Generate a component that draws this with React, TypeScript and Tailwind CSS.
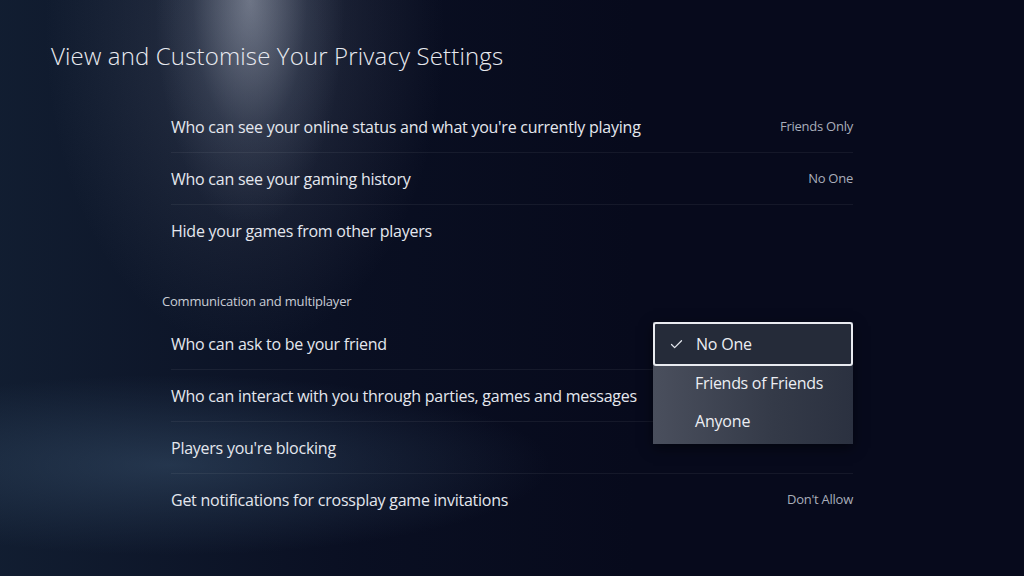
import { Check } from "lucide-react";

const privacyRows = [
  { label: "Who can see your online status and what you're currently playing", value: "Friends Only" },
  { label: "Who can see your gaming history", value: "No One" },
  { label: "Hide your games from other players", value: "" },
];

const commRows = [
  { label: "Who can ask to be your friend", value: "" },
  { label: "Who can interact with you through parties, games and messages", value: "" },
  { label: "Players you're blocking", value: "" },
  { label: "Get notifications for crossplay game invitations", value: "Don't Allow" },
];

const Row = ({ label, value, last }: { label: string; value: string; last?: boolean }) => (
  <div
    className={`flex h-[52px] items-center justify-between ${last ? "" : "border-b border-white/[0.06]"}`}
  >
    <span className="text-[16px] tracking-[-0.25px] text-[#e4e7ee]">{label}</span>
    {value && <span className="text-[13px] tracking-[-0.25px] text-[#a9aebb]">{value}</span>}
  </div>
);

export default function App() {
  return (
    <div className="relative h-[576px] w-[1024px] overflow-hidden bg-[#070a1c] font-['Open_Sans',sans-serif]">
      {/* background light */}
      <div className="pointer-events-none absolute inset-0 bg-[linear-gradient(90deg,rgba(20,34,54,0.8)_0%,rgba(12,20,40,0.5)_35%,rgba(7,10,28,0)_62%)]" />
      <div className="pointer-events-none absolute inset-0 bg-[radial-gradient(ellipse_95px_230px_at_250px_0px,rgba(200,205,218,0.5),rgba(140,150,170,0.15)_60%,transparent_100%)]" />
      <div className="pointer-events-none absolute inset-0 bg-[radial-gradient(ellipse_200px_320px_at_245px_30px,rgba(120,130,150,0.28),transparent_100%)]" />
      <div className="pointer-events-none absolute inset-0 bg-[radial-gradient(ellipse_380px_90px_at_170px_465px,rgba(70,100,130,0.4),transparent_100%)]" />

      <div className="relative">
        <h1 className="pl-[51px] pt-[40px] text-[24px] font-light leading-[32px] tracking-[0.15px] text-[#e8eaf0]">
          View and Customise Your Privacy Settings
        </h1>

        <div className="ml-[171px] mt-[29px] w-[682px]">
          {privacyRows.map((r, i) => (
            <Row key={r.label} label={r.label} value={r.value} last={i === privacyRows.length - 1} />
          ))}
        </div>

        <div className="ml-[162px] flex h-[61px] items-end pb-[9px] text-[13px] leading-[16px] tracking-[-0.2px] text-[#c9cdd6]">
          Communication and multiplayer
        </div>

        <div className="relative ml-[171px] w-[682px]">
          {commRows.map((r, i) => (
            <Row key={r.label} label={r.label} value={r.value} last={i === commRows.length - 1} />
          ))}

          <div className="absolute right-0 top-[4px] w-[200px] bg-[linear-gradient(90deg,#4a4f5d,#343a48_60%,#2b3140)] shadow-[0_4px_12px_rgba(0,0,0,0.5)]">
            <div className="flex h-[44px] items-center rounded-[3px] border-2 border-[#e9ebf0] bg-[#252b39] pl-[14px]">
              <Check className="h-[15px] w-[15px] text-[#e4e7ee]" strokeWidth={2} />
              <span className="ml-[12px] text-[16px] tracking-[-0.2px] text-[#eceef3]">No One</span>
            </div>
            <div className="flex h-[33px] items-center pl-[42px] text-[16px] tracking-[-0.3px] text-[#eceef3]">
              Friends of Friends
            </div>
            <div className="flex h-[45px] items-center pl-[42px] pb-[2px] text-[16px] tracking-[-0.2px] text-[#eceef3]">
              Anyone
            </div>
          </div>
        </div>
      </div>
    </div>
  );
}
